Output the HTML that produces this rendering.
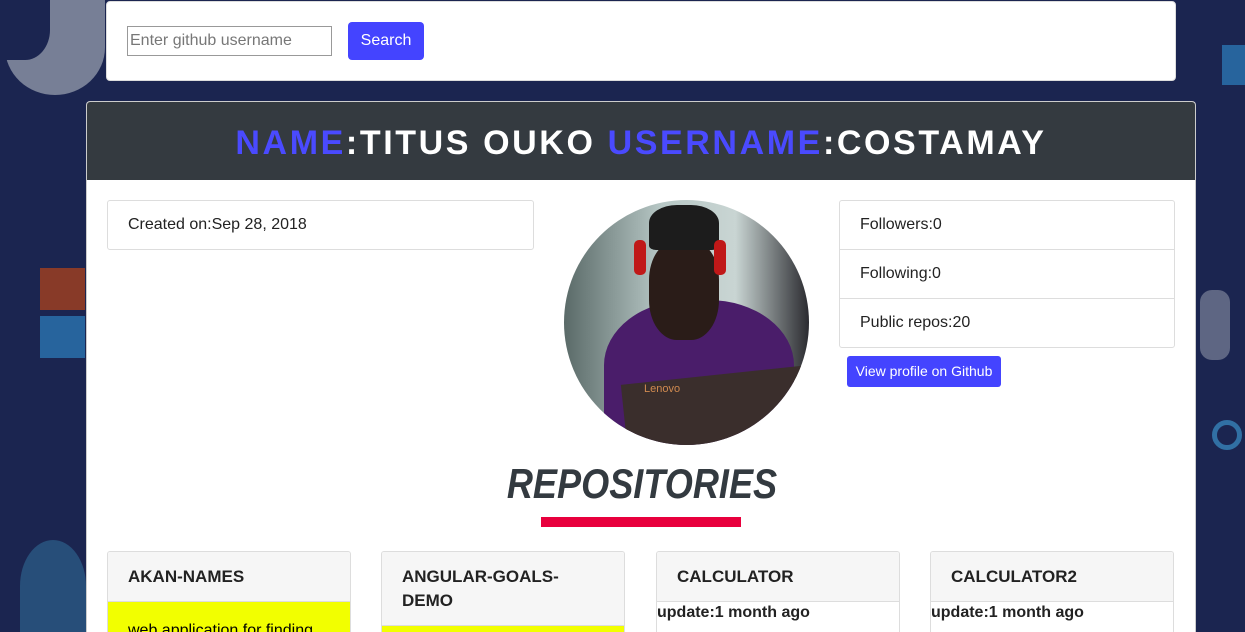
<!DOCTYPE html>
<html style="height:632px;overflow:hidden"><head><meta charset="utf-8"><style>
*{box-sizing:border-box;margin:0;padding:0}
body{width:1245px;height:632px;overflow:hidden;background:#1b2550;font-family:"Liberation Sans",sans-serif;position:relative}
.deco{position:absolute}
.top{position:absolute;left:106px;top:1px;width:1070px;height:80px;background:#fff;border-radius:4px;border:1px solid #ddd}
.inp{position:absolute;left:20px;top:24px;width:205px;height:30px;border:1px solid #999;font-size:16px;color:#777;padding:5px 2px}
.btn{position:absolute;left:241px;top:20px;width:76px;height:38px;background:#4444ff;color:#fff;border-radius:4px;font-size:16px;text-align:center;line-height:38px}
.main{position:absolute;left:86px;top:101px;width:1110px;height:531px;background:#fff;border-radius:4px 4px 0 0;overflow:hidden;border:1px solid #ccc;border-bottom:none}
.hd{height:78px;background:#343a40;color:#fff;text-align:center;font-size:34px;font-weight:bold;line-height:82px;letter-spacing:2.6px}
.hd b{color:#4a4aff}
.box{position:absolute;border:1px solid #ddd;border-radius:3px;background:#fff;font-size:16px;color:#222}
.row{height:49px;border-bottom:1px solid #ddd;padding:15px 20px}
.row:last-child{border-bottom:none}
.av{position:absolute;left:477px;top:98px;width:245px;height:245px;border-radius:50%;overflow:hidden;background:linear-gradient(90deg,#5a6a68 0%,#b8c8c6 40%,#c9d5d3 70%,#2b2b30 100%)}
.gh{position:absolute;left:760px;top:254px;width:154px;height:31px;background:#4444ff;color:#fff;border-radius:3px;font-size:14px;text-align:center;line-height:31px}
.rt{position:absolute;left:0;width:1110px;top:358px;text-align:center;font-size:42px;font-weight:bold;font-style:italic;color:#333a40;transform:scaleX(0.86)}
.bar{position:absolute;left:454px;top:415px;width:200px;height:10px;background:#e8003d}
.card{position:absolute;top:449px;width:244px;height:82px;border:1px solid #ddd;border-bottom:none;border-radius:3px 3px 0 0;background:#fff;overflow:hidden}
.ch{background:#f6f6f6;border-bottom:1px solid #ddd;padding:13px 20px 12px;font-weight:bold;font-size:17px;color:#222;line-height:24px}
.y{background:#f2ff00;height:80px;padding:20px;font-size:16px}
.up{font-weight:bold;font-size:16px;padding:2px 0;color:#222}
</style></head><body>
<div class="deco" style="left:5px;top:0;width:100px;height:95px;border-radius:0 0 50% 50%;background:#8f96a8;opacity:.8"></div>
<div class="deco" style="left:0;top:0;width:50px;height:60px;border-radius:0 0 50% 0;background:#1b2550"></div>
<div class="deco" style="left:40px;top:268px;width:45px;height:42px;background:#a4401e;opacity:.8"></div>
<div class="deco" style="left:40px;top:316px;width:45px;height:42px;background:#2a74b0;opacity:.8"></div>
<div class="deco" style="left:1222px;top:45px;width:23px;height:40px;background:#2a74b0;opacity:.8"></div>
<div class="deco" style="left:1200px;top:290px;width:30px;height:70px;border-radius:12px;background:#7a8298;opacity:.7"></div>
<div class="deco" style="left:1212px;top:420px;width:30px;height:30px;border-radius:50%;border:5px solid #3a90c8;opacity:.7"></div>
<div class="deco" style="left:20px;top:540px;width:66px;height:92px;border-radius:50% 50% 0 0;background:#2c5f8a;opacity:.7"></div>
<div class="top"><div class="inp">Enter github username</div><div class="btn">Search</div></div>
<div class="main">
<div class="hd"><b>NAME</b>:TITUS OUKO <b>USERNAME</b>:COSTAMAY</div>
<div class="box" style="left:20px;top:98px;width:427px;height:50px"><div class="row">Created on:Sep 28, 2018</div></div>
<div class="av">
<div style="position:absolute;left:40px;top:100px;width:190px;height:145px;border-radius:45% 45% 0 0;background:#4a1d6a"></div>
<div style="position:absolute;left:85px;top:40px;width:70px;height:100px;border-radius:40%;background:#2a1c18"></div>
<div style="position:absolute;left:85px;top:5px;width:70px;height:45px;border-radius:40% 40% 10% 10%;background:#1c1c1c"></div>
<div style="position:absolute;left:70px;top:40px;width:12px;height:35px;border-radius:5px;background:#c01818"></div>
<div style="position:absolute;left:150px;top:40px;width:12px;height:35px;border-radius:5px;background:#c01818"></div>
<div style="position:absolute;left:60px;top:175px;width:185px;height:70px;background:#3a2e2c;transform:rotate(-6deg)"></div>
<div style="position:absolute;left:80px;top:183px;font-size:11px;color:#d08a50">Lenovo</div>
</div>
<div class="box" style="left:752px;top:98px;width:336px;height:148px">
<div class="row">Followers:0</div><div class="row">Following:0</div><div class="row">Public repos:20</div></div>
<div class="gh">View profile on Github</div>
<div class="rt">REPOSITORIES</div>
<div class="bar"></div>
<div class="card" style="left:20px"><div class="ch">AKAN-NAMES</div><div class="y">web application for finding</div></div>
<div class="card" style="left:294px"><div class="ch">ANGULAR-GOALS-<br>DEMO</div><div class="y"></div></div>
<div class="card" style="left:569px"><div class="ch">CALCULATOR</div><div class="up">update:1 month ago</div></div>
<div class="card" style="left:843px"><div class="ch">CALCULATOR2</div><div class="up">update:1 month ago</div></div>
</div>
</body></html>
